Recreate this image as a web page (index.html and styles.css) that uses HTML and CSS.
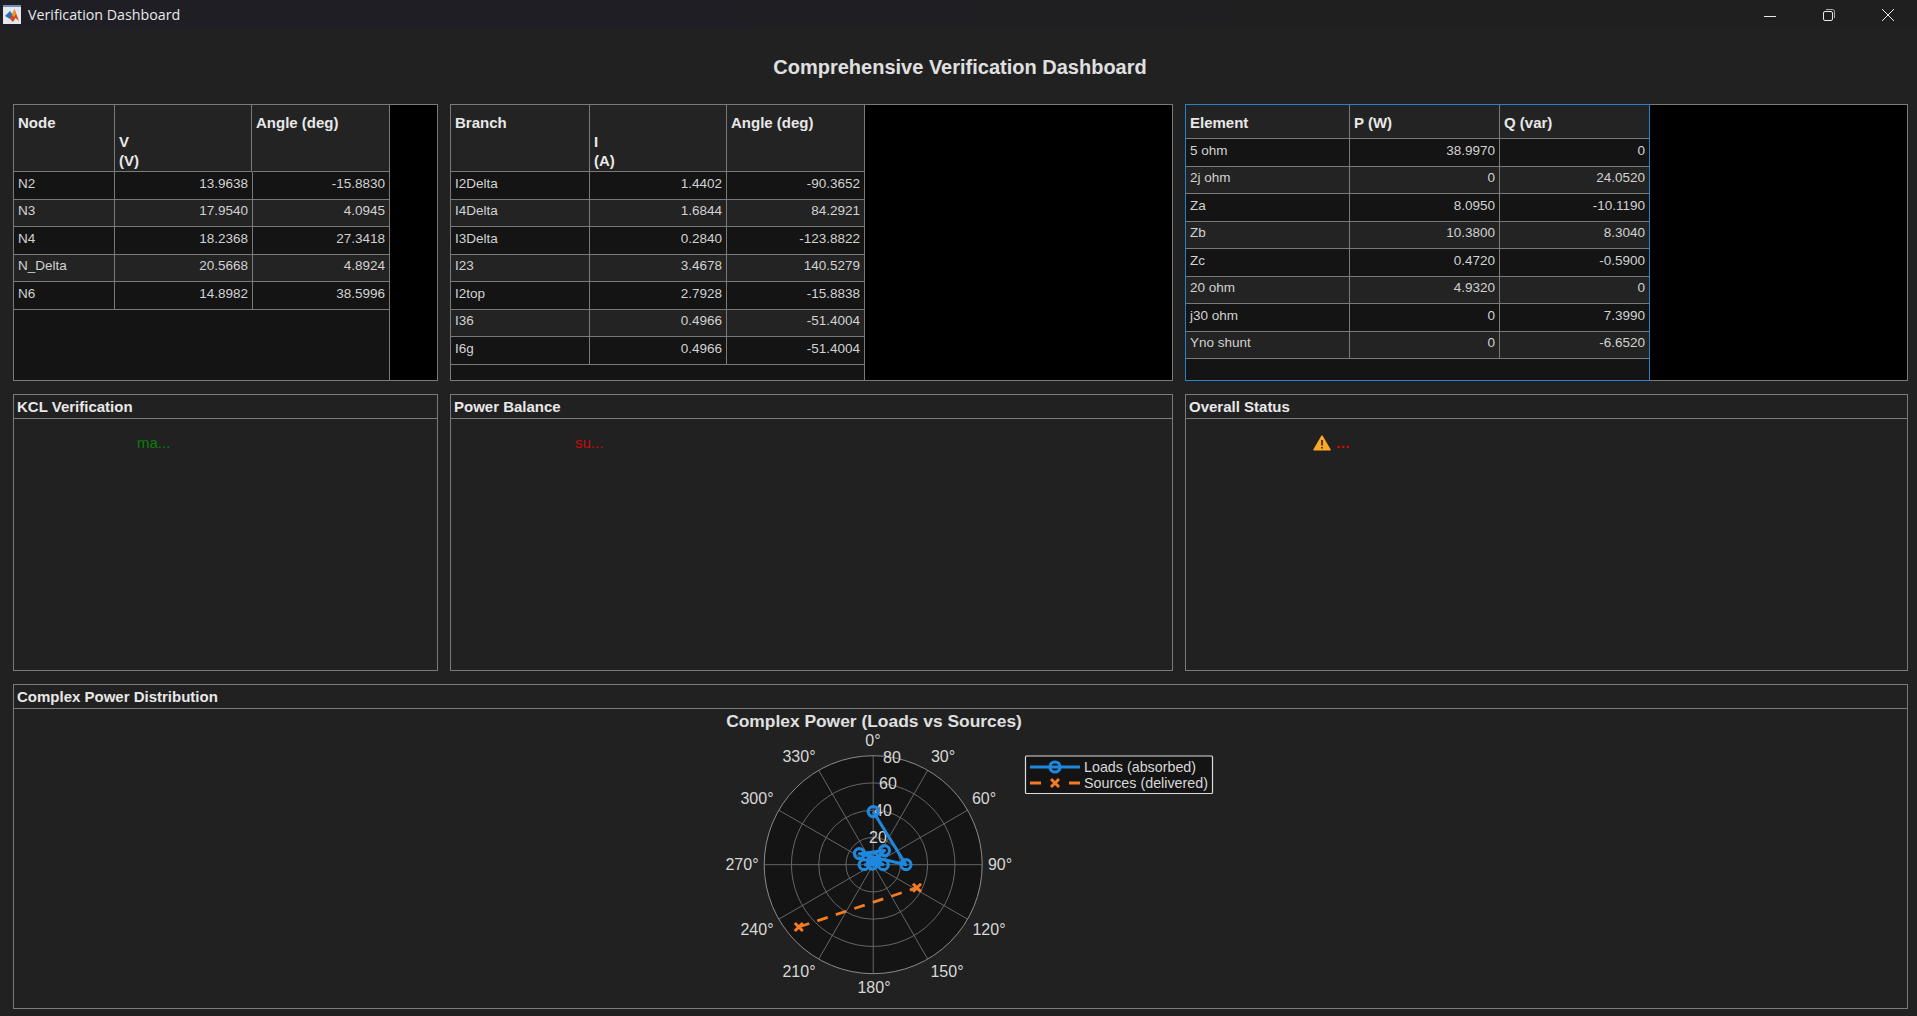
FILE: index.html
```html
<!DOCTYPE html>
<html lang="en">
<head>
    <meta charset="UTF-8">
    <title>Verification Dashboard</title>
    <link rel="stylesheet" href="styles.css">
</head>
<body>

    <header class="titlebar">
        <svg class="app-icon" width="18" height="19" viewBox="0 0 18 19">
            <rect x="0" y="0" width="18" height="19" fill="#e6e8f0"/>
            <rect x="0" y="0" width="18" height="2" fill="#6d8fb8"/>
            <path d="M2 11 L7 6 L10 10 L7 14 Z" fill="#2a6fb8"/>
            <path d="M7 14 L11.5 4 L16 16 L12.5 13 L10 17 Z" fill="#d4481a"/>
            <path d="M9 10 L11.5 4 L13 9 L11 12 Z" fill="#f29a2e"/>
        </svg>
        <span class="window-title">Verification Dashboard</span>
        <div class="window-controls">
            <svg width="12" height="12" viewBox="0 0 12 12"><path d="M0 7.5H12" stroke="#e8e8e8" fill="none"/></svg>
            <svg width="12" height="12" viewBox="0 0 12 12"><rect x="0.5" y="2.5" width="9" height="9" rx="1.5" stroke="#e8e8e8" fill="none"/><path d="M3 0.5H9.5Q11.5 0.5 11.5 2.5V9" stroke="#aaa" fill="none"/></svg>
            <svg width="12" height="12" viewBox="0 0 12 12"><path d="M0 0L12 12M12 0L0 12" stroke="#e8e8e8" fill="none"/></svg>
        </div>
    </header>

    <h1 class="dash-title">Comprehensive Verification Dashboard</h1>

    <main class="dash-grid">

        <div class="table-box">
            <div class="table-wrap wrap-node">
                <table>
                    <colgroup><col class="w101"><col class="w138"><col class="w136"></colgroup>
                    <thead><tr class="head-tall"><th>Node</th><th class="th-unit">V<br>(V)</th><th>Angle (deg)</th></tr></thead>
                    <tbody>
                        <tr><td>N2</td><td class="num">13.9638</td><td class="num">-15.8830</td></tr>
                        <tr><td>N3</td><td class="num">17.9540</td><td class="num">4.0945</td></tr>
                        <tr><td>N4</td><td class="num">18.2368</td><td class="num">27.3418</td></tr>
                        <tr><td>N_Delta</td><td class="num">20.5668</td><td class="num">4.8924</td></tr>
                        <tr><td>N6</td><td class="num">14.8982</td><td class="num">38.5996</td></tr>
                    </tbody>
                </table>
            </div>
            <div class="table-void"></div>
        </div>

        <div class="table-box">
            <div class="table-wrap wrap-branch">
                <table>
                    <colgroup><col class="w139"><col class="w137"><col class="w137"></colgroup>
                    <thead><tr class="head-tall"><th>Branch</th><th class="th-unit">I<br>(A)</th><th>Angle (deg)</th></tr></thead>
                    <tbody>
                        <tr><td>I2Delta</td><td class="num">1.4402</td><td class="num">-90.3652</td></tr>
                        <tr><td>I4Delta</td><td class="num">1.6844</td><td class="num">84.2921</td></tr>
                        <tr><td>I3Delta</td><td class="num">0.2840</td><td class="num">-123.8822</td></tr>
                        <tr><td>I23</td><td class="num">3.4678</td><td class="num">140.5279</td></tr>
                        <tr><td>I2top</td><td class="num">2.7928</td><td class="num">-15.8838</td></tr>
                        <tr><td>I36</td><td class="num">0.4966</td><td class="num">-51.4004</td></tr>
                        <tr><td>I6g</td><td class="num">0.4966</td><td class="num">-51.4004</td></tr>
                    </tbody>
                </table>
            </div>
            <div class="table-void"></div>
        </div>

        <div class="table-box">
            <div class="table-wrap wrap-element">
                <table>
                    <colgroup><col class="w164"><col class="w150"><col class="w149"></colgroup>
                    <thead><tr class="head-short"><th>Element</th><th>P (W)</th><th>Q (var)</th></tr></thead>
                    <tbody>
                        <tr><td>5 ohm</td><td class="num">38.9970</td><td class="num">0</td></tr>
                        <tr><td>2j ohm</td><td class="num">0</td><td class="num">24.0520</td></tr>
                        <tr><td>Za</td><td class="num">8.0950</td><td class="num">-10.1190</td></tr>
                        <tr><td>Zb</td><td class="num">10.3800</td><td class="num">8.3040</td></tr>
                        <tr><td>Zc</td><td class="num">0.4720</td><td class="num">-0.5900</td></tr>
                        <tr><td>20 ohm</td><td class="num">4.9320</td><td class="num">0</td></tr>
                        <tr><td>j30 ohm</td><td class="num">0</td><td class="num">7.3990</td></tr>
                        <tr><td>Yno shunt</td><td class="num">0</td><td class="num">-6.6520</td></tr>
                    </tbody>
                </table>
            </div>
            <div class="table-void"></div>
        </div>

        <section class="panel">
            <div class="panel-title">KCL Verification</div>
            <div class="panel-body status-kcl"><span class="ok">ma...</span></div>
        </section>

        <section class="panel">
            <div class="panel-title">Power Balance</div>
            <div class="panel-body status-power"><span class="bad">su...</span></div>
        </section>

        <section class="panel">
            <div class="panel-title">Overall Status</div>
            <div class="panel-body status-overall">
                <svg width="18" height="16" viewBox="0 0 18 16">
                    <path d="M9 1.2 L17 14.8 H1 Z" fill="#f9a825" stroke="#f9a825" stroke-width="1.6" stroke-linejoin="round"/>
                    <path d="M9 5V10.5" stroke="#222" stroke-width="1.6"/>
                    <path d="M9 12V13.6" stroke="#222" stroke-width="1.6"/>
                </svg>
                <span class="bad-dots">...</span>
            </div>
        </section>

        <section class="panel panel-wide">
            <div class="panel-title">Complex Power Distribution</div>
            <div class="panel-body">
                <!-- viewBox is in window pixels, so points read straight off the plot -->
                <svg class="polar" width="1893" height="299" viewBox="14 709 1893 299">
                    <text class="chart-title" x="874" y="727">Complex Power (Loads vs Sources)</text>

                    <g transform="translate(873.2 864.7)">
                        <circle r="109" fill="#141414"/>
                        <g class="grid-lines">
                            <circle r="27.25"/>
                            <circle r="54.5"/>
                            <circle r="81.75"/>
                            <path d="M0 -109V109M-109 0H109M54.5 -94.4L-54.5 94.4M94.4 -54.5L-94.4 54.5M94.4 54.5L-94.4 -54.5M54.5 94.4L-54.5 -94.4"/>
                        </g>
                        <circle class="rim" r="109"/>
                    </g>

                    <g class="tick">
                        <text x="873" y="746">0°</text>
                        <text x="943" y="762">30°</text>
                        <text x="984" y="804">60°</text>
                        <text x="1000" y="870">90°</text>
                        <text x="989" y="935">120°</text>
                        <text x="947" y="977">150°</text>
                        <text x="874" y="993">180°</text>
                        <text x="799" y="977">210°</text>
                        <text x="757" y="935">240°</text>
                        <text x="742" y="870">270°</text>
                        <text x="757" y="804">300°</text>
                        <text x="799" y="762">330°</text>
                        <text x="892" y="763">80</text>
                        <text x="888" y="789">60</text>
                        <text x="883" y="816">40</text>
                        <text x="878" y="843">20</text>
                    </g>

                    <g transform="translate(873.2 864.7)">
                        <path class="source-line" d="M-74.4 62.3L43.8 23"/>
                        <path class="source-mark" d="M39.8 19L47.8 27M47.8 19L39.8 27M-78.4 58.3L-70.4 66.3M-70.4 58.3L-78.4 66.3"/>
                        <path class="load-line" d="M0 -53.1L32.8 0L-13.8 -11L11.3 -14.1L-0.8 -0.6L0 -6.7L10.1 0L-9.1 0"/>
                        <g class="load-mark">
                            <circle cx="0" cy="-53.1" r="5"/>
                            <circle cx="32.8" cy="0" r="5"/>
                            <circle cx="-13.8" cy="-11" r="5"/>
                            <circle cx="11.3" cy="-14.1" r="5"/>
                            <circle cx="-0.8" cy="-0.6" r="5"/>
                            <circle cx="0" cy="-6.7" r="5"/>
                            <circle cx="10.1" cy="0" r="5"/>
                            <circle cx="-9.1" cy="0" r="5"/>
                        </g>
                    </g>

                    <g class="legend">
                        <rect x="1025.5" y="756" width="187" height="37.5" rx="1"/>
                        <path class="load-line" d="M1030 767H1080"/>
                        <circle class="load-mark" cx="1055" cy="767" r="5"/>
                        <path class="source-line" d="M1030 783H1041M1069 783H1080"/>
                        <path class="source-mark" d="M1051 779L1059 787M1059 779L1051 787"/>
                        <text x="1084" y="772">Loads (absorbed)</text>
                        <text x="1084" y="788">Sources (delivered)</text>
                    </g>
                </svg>
            </div>
        </section>

    </main>

</body>
</html>
```

FILE: styles.css
```css
* {
    box-sizing: border-box;
}
body {
    margin: 0;
    width: 1917px;
    height: 1016px;
    overflow: hidden;
    background-color: #212121;
    color: #d8d8d8;
    font-family: "Liberation Sans", Arial, sans-serif;
}

/* window chrome */
.titlebar {
    display: flex;
    align-items: center;
    height: 29px;
    padding-left: 3px;
    background: linear-gradient(to right, #1f1e25 0, #1f1e25 600px, #1f1f1f 1400px);
}
.app-icon {
    flex: none;
}
.window-title {
    margin-left: 7px;
    font-family: "Open Sans", sans-serif;
    font-size: 14.25px;
    color: #e8e8e8;
}
.window-controls {
    display: flex;
    gap: 47px;
    margin-left: auto;
    margin-right: 23px;
}

.dash-title {
    display: flex;
    align-items: center;
    justify-content: center;
    height: 75px;
    margin: 0;
    padding: 2px 0 0 3px;
    font-size: 20px;
    font-weight: bold;
    color: #e0e0e0;
}

.dash-grid {
    display: grid;
    grid-template-columns: 425px 723px 723px;
    grid-template-rows: 277px 277px 325px;
    column-gap: 12px;
    row-gap: 13px;
    padding-left: 13px;
}

/* tables */
.table-box {
    display: flex;
    min-width: 0;
}
.table-wrap {
    flex: none;
    border: 1px solid #7a7a7a;
    background-color: #141414;
}
.wrap-node { width: 377px; }
.wrap-branch { width: 415px; }
.wrap-element { width: 465px; border-color: #2a80cc; }
.table-void {
    flex: 1;
    border: 1px solid #7a7a7a;
    border-left: none;
    background-color: #000;
}
table {
    border-collapse: separate;
    border-spacing: 0;
    table-layout: fixed;
    width: 100%;
    font-size: 13.5px;
}
.w101 { width: 101px; }
.w136 { width: 136px; }
.w137 { width: 137px; }
.w138 { width: 138px; }
.w139 { width: 139px; }
.w149 { width: 149px; }
.w150 { width: 150px; }
.w164 { width: 164px; }

th, td {
    border-right: 1px solid #7a7a7a;
    border-bottom: 1px solid #7a7a7a;
    overflow: hidden;
    white-space: nowrap;
}
th:last-child, td:last-child {
    border-right: none;
}
th {
    padding: 8px 4px 0;
    background-color: #232323;
    color: #e8e8e8;
    font-size: 15px;
    font-weight: bold;
    line-height: 19px;
    text-align: left;
    vertical-align: top;
}
.th-unit {
    padding: 0 4px 1px;
    vertical-align: bottom;
}
/* header divider sits a pixel left of the row dividers in this table */
.wrap-node th:nth-child(2) {
    border-right-color: #232323;
    box-shadow: inset -1px 0 #7a7a7a;
}
.wrap-node th:nth-child(3) {
    padding-left: 3px;
}
.head-tall { height: 67px; }
.head-short { height: 34px; }
td {
    padding: 3px 4px 0;
    color: #d2d2d2;
    line-height: 18px;
    vertical-align: top;
}
tbody tr:nth-child(odd) { height: 28px; background-color: #141414; }
tbody tr:nth-child(even) { height: 27px; background-color: #232323; }
tbody tr:nth-child(even) td { padding-top: 2px; }
.num { text-align: right; }

/* panels */
.panel {
    display: flex;
    flex-direction: column;
    border: 1px solid #7a7a7a;
}
.panel-wide {
    grid-column: 1 / -1;
}
.panel-title {
    flex: none;
    height: 24px;
    padding-left: 3px;
    border-bottom: 1px solid #7a7a7a;
    color: #e8e8e8;
    font-size: 15px;
    font-weight: bold;
    line-height: 23px;
}
.panel-body {
    flex: 1;
    font-size: 15px;
}
.status-kcl { padding: 15px 0 0 123px; }
.status-power { padding: 15px 0 0 124px; }
.status-overall {
    display: flex;
    align-items: flex-start;
    gap: 5px;
    padding: 16px 0 0 127px;
}
.ok { color: #0d7d0d; }
.bad { color: #c80a0a; }
.bad-dots { color: #d00a0a; font-weight: bold; line-height: 15px; letter-spacing: 0.5px; }

/* polar chart */
.polar {
    display: block;
}
.polar text {
    font-family: "Liberation Sans", Arial, sans-serif;
}
.chart-title {
    fill: #e0e0e0;
    font-size: 17.4px;
    font-weight: bold;
    text-anchor: middle;
}
.grid-lines circle, .grid-lines path {
    fill: none;
    stroke: #666;
    stroke-width: 1;
}
.rim {
    fill: none;
    stroke: #8a8a8a;
    stroke-width: 1;
}
.tick text {
    fill: #d8d8d8;
    font-size: 16px;
    text-anchor: middle;
}
.load-line {
    fill: none;
    stroke: #1f88dd;
    stroke-width: 3;
    stroke-linejoin: round;
}
.load-mark, .load-mark circle {
    fill: none;
    stroke: #1f88dd;
    stroke-width: 3.2;
}
.source-line {
    fill: none;
    stroke: #f47b20;
    stroke-width: 2.8;
    stroke-dasharray: 11 8.5;
}
.source-mark {
    fill: none;
    stroke: #f47b20;
    stroke-width: 3;
}
.legend rect {
    fill: #141414;
    stroke: #dcdcdc;
    stroke-width: 1.2;
}
.legend text {
    fill: #d8d8d8;
    font-size: 14.3px;
}
.legend .source-line {
    stroke-dasharray: none;
}
```
